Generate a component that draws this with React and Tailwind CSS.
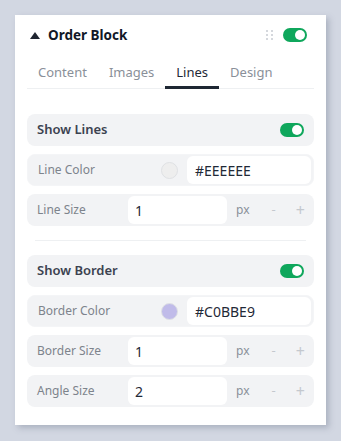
import React, { useState } from 'react';

const Toggle = ({ on, onClick }) => (
  <button
    onClick={onClick}
    className={`w-[24px] h-[14px] rounded-full flex items-center px-[2px] ${on ? 'bg-[#0fa75c] justify-end' : 'bg-gray-300 justify-start'}`}
  >
    <span className="w-[10px] h-[10px] rounded-full bg-white block" />
  </button>
);

const DragDots = () => (
  <svg width="8" height="12" viewBox="0 0 8 12" fill="#d5d8dd">
    <rect x="0" y="1" width="2" height="2" /><rect x="5" y="1" width="2" height="2" />
    <rect x="0" y="5" width="2" height="2" /><rect x="5" y="5" width="2" height="2" />
    <rect x="0" y="9" width="2" height="2" /><rect x="5" y="9" width="2" height="2" />
  </svg>
);

const SectionHead = ({ title, on, onToggle }) => (
  <div className="h-[32px] bg-[#f2f3f5] rounded-lg flex items-center justify-between pl-[10px] pr-[10px]">
    <span className="text-[13px] font-semibold text-[#3b4250]">{title}</span>
    <Toggle on={on} onClick={onToggle} />
  </div>
);

const ColorRow = ({ label, color, value }) => (
  <div className="h-[32px] bg-[#f2f3f5] rounded-lg flex items-center pl-[10px] pr-[2px] border border-[#f4f5f7]">
    <span className="flex-1 text-[12px] text-[#7d838c]">{label}</span>
    <span
      className="w-[17px] h-[17px] rounded-full border border-[#dfe1e4]"
      style={{ backgroundColor: color }}
    />
    <div className="ml-[9px] w-[124px] h-[28px] bg-white rounded-md flex items-center pl-[8px] text-[14px] text-[#1f2937]">
      {value}
    </div>
  </div>
);

const SizeRow = ({ label, value }) => (
  <div className="h-[32px] bg-[#f2f3f5] rounded-lg flex items-center">
    <span className="w-[101px] shrink-0 pl-[10px] text-[12px] text-[#7d838c]">{label}</span>
    <div className="w-[99px] h-[28px] bg-white rounded-md flex items-center pl-[7px] text-[14px] text-[#1f2937]">
      {value}
    </div>
    <span className="ml-[9px] text-[12px] text-[#8a9099]">px</span>
    <span className="ml-[22px] text-[13px] text-[#c4c8ce]">-</span>
    <span className="ml-[20px] text-[16px] leading-none text-[#c4c8ce]">+</span>
  </div>
);

export default function App() {
  const [enabled, setEnabled] = useState(true);
  const [showLines, setShowLines] = useState(true);
  const [showBorder, setShowBorder] = useState(true);
  const tabs = ['Content', 'Images', 'Lines', 'Design'];

  return (
    <div className="min-h-[441px] bg-[#d2d7e2] p-[15px]" style={{ fontFamily: '"Noto Sans", "Open Sans", sans-serif' }}>
      <div className="w-[311px] h-[410px] bg-white shadow-[3px_3px_6px_rgba(100,110,130,0.35)] px-3 pt-[10px]">
        {/* Header */}
        <div className="h-[20px] flex items-center justify-between pl-[3px] pr-[7px]">
          <div className="flex items-center">
            <svg width="10" height="7" viewBox="0 0 10 7" fill="#1f2430"><path d="M5 0L10 7H0z" /></svg>
            <span className="ml-[8px] text-[13.5px] font-bold text-[#111827]">Order Block</span>
          </div>
          <div className="flex items-center gap-[9px]">
            <DragDots />
            <Toggle on={enabled} onClick={() => setEnabled(!enabled)} />
          </div>
        </div>

        {/* Tabs */}
        <div className="mt-[14px] flex border-b border-[#eef0f2]">
          {tabs.map((t) => (
            <div
              key={t}
              className={`h-[30px] px-[11px] flex items-center text-[13px] border-b-[3px] -mb-px ${t === 'Lines' ? 'border-[#1e2733] text-[#1f2937]' : 'border-transparent text-[#8a9099]'}`}
            >
              {t}
            </div>
          ))}
        </div>

        {/* Lines */}
        <div className="mt-[25px] flex flex-col gap-2">
          <SectionHead title="Show Lines" on={showLines} onToggle={() => setShowLines(!showLines)} />
          <ColorRow label="Line Color" color="#EEEEEE" value="#EEEEEE" />
          <SizeRow label="Line Size" value="1" />
        </div>

        <div className="mx-2 mt-[14px] border-t border-[#eef0f2]" />

        {/* Border */}
        <div className="mt-[14px] flex flex-col gap-2">
          <SectionHead title="Show Border" on={showBorder} onToggle={() => setShowBorder(!showBorder)} />
          <ColorRow label="Border Color" color="#C0BBE9" value="#C0BBE9" />
          <SizeRow label="Border Size" value="1" />
          <SizeRow label="Angle Size" value="2" />
        </div>
      </div>
    </div>
  );
}
